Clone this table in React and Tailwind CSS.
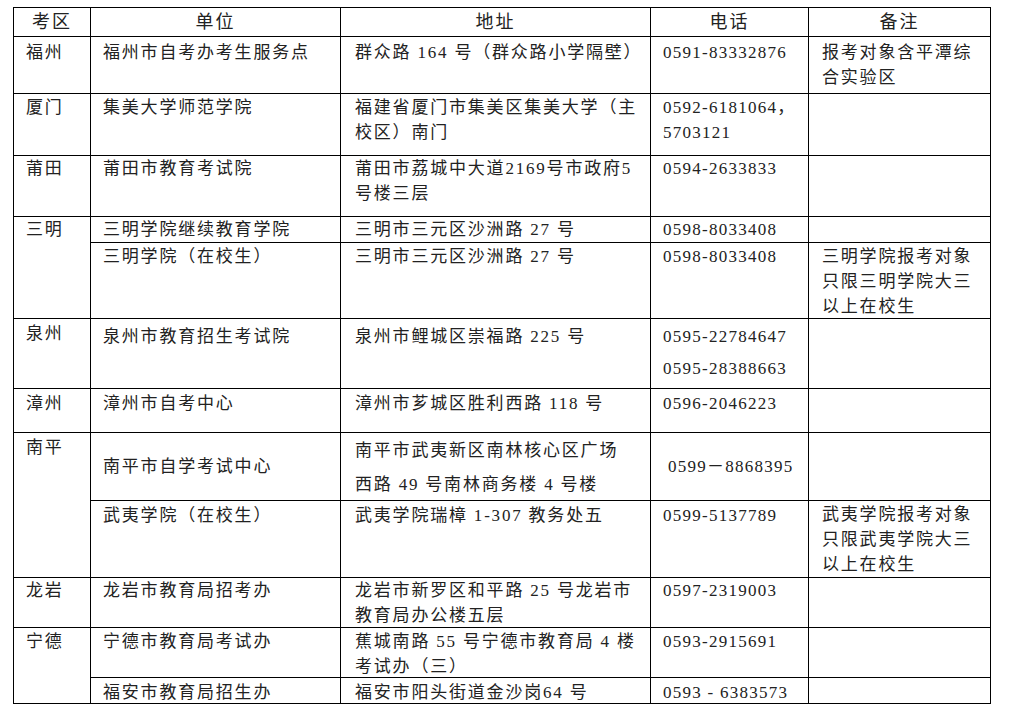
import React from 'react';

// contents sit in a zero-height box so the row heights come only from the <tr>
function Cell({ children, className = '', rowSpan, kind = 'zh' }) {
  const spacing = kind === 'tel' ? 'tracking-[1.25px]' : 'tracking-[1.8px]';
  return (
    <td rowSpan={rowSpan} className="border border-black align-top p-0">
      <div className="h-0 overflow-visible">
        <div className={`leading-[25px] text-[17px] whitespace-nowrap ${spacing} ${className}`}>{children}</div>
      </div>
    </td>
  );
}

export default function App() {
  return (
    <div className="min-h-[714px] w-[1009px] bg-white pl-[13px] pt-[7px] text-[#222] font-['Liberation_Serif','Noto_Sans_CJK_SC',serif]">
      <table className="table-fixed border-collapse w-[977px]">
        <colgroup>
          <col className="w-[77px]" />
          <col className="w-[250px]" />
          <col className="w-[310px]" />
          <col className="w-[158px]" />
          <col className="w-[182px]" />
        </colgroup>
        <thead>
          <tr className="h-[29px]">
            {['考区', '单位', '地址', '电话', '备注'].map((h) => (
              <th key={h} className="border border-black text-center align-middle font-normal text-[18px] leading-[25px] tracking-[2px] p-0">
                {h}
              </th>
            ))}
          </tr>
        </thead>
        <tbody>
          {/* 福州 */}
          <tr className="h-[57px]">
            <Cell className="pl-3 pt-[3px]">福州</Cell>
            <Cell className="pl-3 pt-[3px]">福州市自考办考生服务点</Cell>
            <Cell className="pl-[14px] pt-[3px]">群众路 164 号（群众路小学隔壁）</Cell>
            <Cell kind="tel" className="pl-3 pt-[3px]">0591-83332876</Cell>
            <Cell className="pl-[13px] pt-[3px]">报考对象含平潭综<br />合实验区</Cell>
          </tr>
          {/* 厦门 */}
          <tr className="h-[62px]">
            <Cell className="pl-3 pt-[1px]">厦门</Cell>
            <Cell className="pl-3 pt-[1px]">集美大学师范学院</Cell>
            <Cell className="pl-[14px] pt-[1px]">福建省厦门市集美区集美大学（主<br />校区）南门</Cell>
            <Cell kind="tel" className="pl-3 pt-[1px]">0592-6181064，<br />5703121</Cell>
            <Cell />
          </tr>
          {/* 莆田 */}
          <tr className="h-[61px]">
            <Cell className="pl-3">莆田</Cell>
            <Cell className="pl-3">莆田市教育考试院</Cell>
            <Cell className="pl-[14px] leading-[24px]">莆田市荔城中大道2169号市政府5<br />号楼三层</Cell>
            <Cell kind="tel" className="pl-3">0594-2633833</Cell>
            <Cell />
          </tr>
          {/* 三明 */}
          <tr className="h-[26px]">
            <Cell rowSpan={2} className="pl-3">三明</Cell>
            <Cell className="pl-3">三明学院继续教育学院</Cell>
            <Cell className="pl-[14px]">三明市三元区沙洲路 27 号</Cell>
            <Cell kind="tel" className="pl-3">0598-8033408</Cell>
            <Cell />
          </tr>
          <tr className="h-[76px]">
            <Cell className="pl-3 pt-[1px]">三明学院（在校生）</Cell>
            <Cell className="pl-[14px] pt-[1px]">三明市三元区沙洲路 27 号</Cell>
            <Cell kind="tel" className="pl-3 pt-[1px]">0598-8033408</Cell>
            <Cell className="pl-[13px] pt-[1px] leading-[24px]">三明学院报考对象<br />只限三明学院大三<br />以上在校生</Cell>
          </tr>
          {/* 泉州 */}
          <tr className="h-[70px]">
            <Cell className="pl-3 pt-[2px]">泉州</Cell>
            <Cell className="pl-3 pt-[5px]">泉州市教育招生考试院</Cell>
            <Cell className="pl-[14px] pt-[5px]">泉州市鲤城区崇福路 225 号</Cell>
            <Cell kind="tel" className="pl-3 pt-[5px]">
              <div className="flex flex-col gap-[7px]">
                <p>0595-22784647</p>
                <p>0595-28388663</p>
              </div>
            </Cell>
            <Cell />
          </tr>
          {/* 漳州 */}
          <tr className="h-[44px]">
            <Cell className="pl-3 pt-[2px]">漳州</Cell>
            <Cell className="pl-3 pt-[2px]">漳州市自考中心</Cell>
            <Cell className="pl-[14px] pt-[2px]">漳州市芗城区胜利西路 118 号</Cell>
            <Cell kind="tel" className="pl-3 pt-[2px]">0596-2046223</Cell>
            <Cell />
          </tr>
          {/* 南平 */}
          <tr className="h-[68px]">
            <Cell rowSpan={2} className="pl-3 pt-[2px]">南平</Cell>
            <Cell className="pl-3 pt-[21px]">南平市自学考试中心</Cell>
            <Cell className="pl-[14px] pt-[1px] leading-[34px]">南平市武夷新区南林核心区广场<br />西路 49 号南林商务楼 4 号楼</Cell>
            <Cell kind="tel" className="pl-[17px] pt-[21px]">0599－8868395</Cell>
            <Cell />
          </tr>
          <tr className="h-[77px]">
            <Cell className="pl-3 pt-[2px]">武夷学院（在校生）</Cell>
            <Cell className="pl-[14px] pt-[2px]">武夷学院瑞樟 1-307 教务处五</Cell>
            <Cell kind="tel" className="pl-3 pt-[2px]">0599-5137789</Cell>
            <Cell className="pl-[13px] pt-[1px]">武夷学院报考对象<br />只限武夷学院大三<br />以上在校生</Cell>
          </tr>
          {/* 龙岩 */}
          <tr className="h-[50px]">
            <Cell className="pl-3">龙岩</Cell>
            <Cell className="pl-3">龙岩市教育局招考办</Cell>
            <Cell className="pl-[14px] leading-[24px]">龙岩市新罗区和平路 25 号龙岩市<br />教育局办公楼五层</Cell>
            <Cell kind="tel" className="pl-3">0597-2319003</Cell>
            <Cell />
          </tr>
          {/* 宁德 */}
          <tr className="h-[50px]">
            <Cell rowSpan={2} className="pl-3 pt-[1px]">宁德</Cell>
            <Cell className="pl-3 pt-[1px]">宁德市教育局考试办</Cell>
            <Cell className="pl-[14px] pt-[1px] leading-[24px]">蕉城南路 55 号宁德市教育局 4 楼<br />考试办（三）</Cell>
            <Cell kind="tel" className="pl-3 pt-[1px]">0593-2915691</Cell>
            <Cell />
          </tr>
          <tr className="h-[26px]">
            <Cell className="pl-3 pt-[2px]">福安市教育局招生办</Cell>
            <Cell className="pl-[14px] pt-[2px]">福安市阳头街道金沙岗64 号</Cell>
            <Cell kind="tel" className="pl-3 pt-[2px]">0593 - 6383573</Cell>
            <Cell />
          </tr>
        </tbody>
      </table>
    </div>
  );
}
